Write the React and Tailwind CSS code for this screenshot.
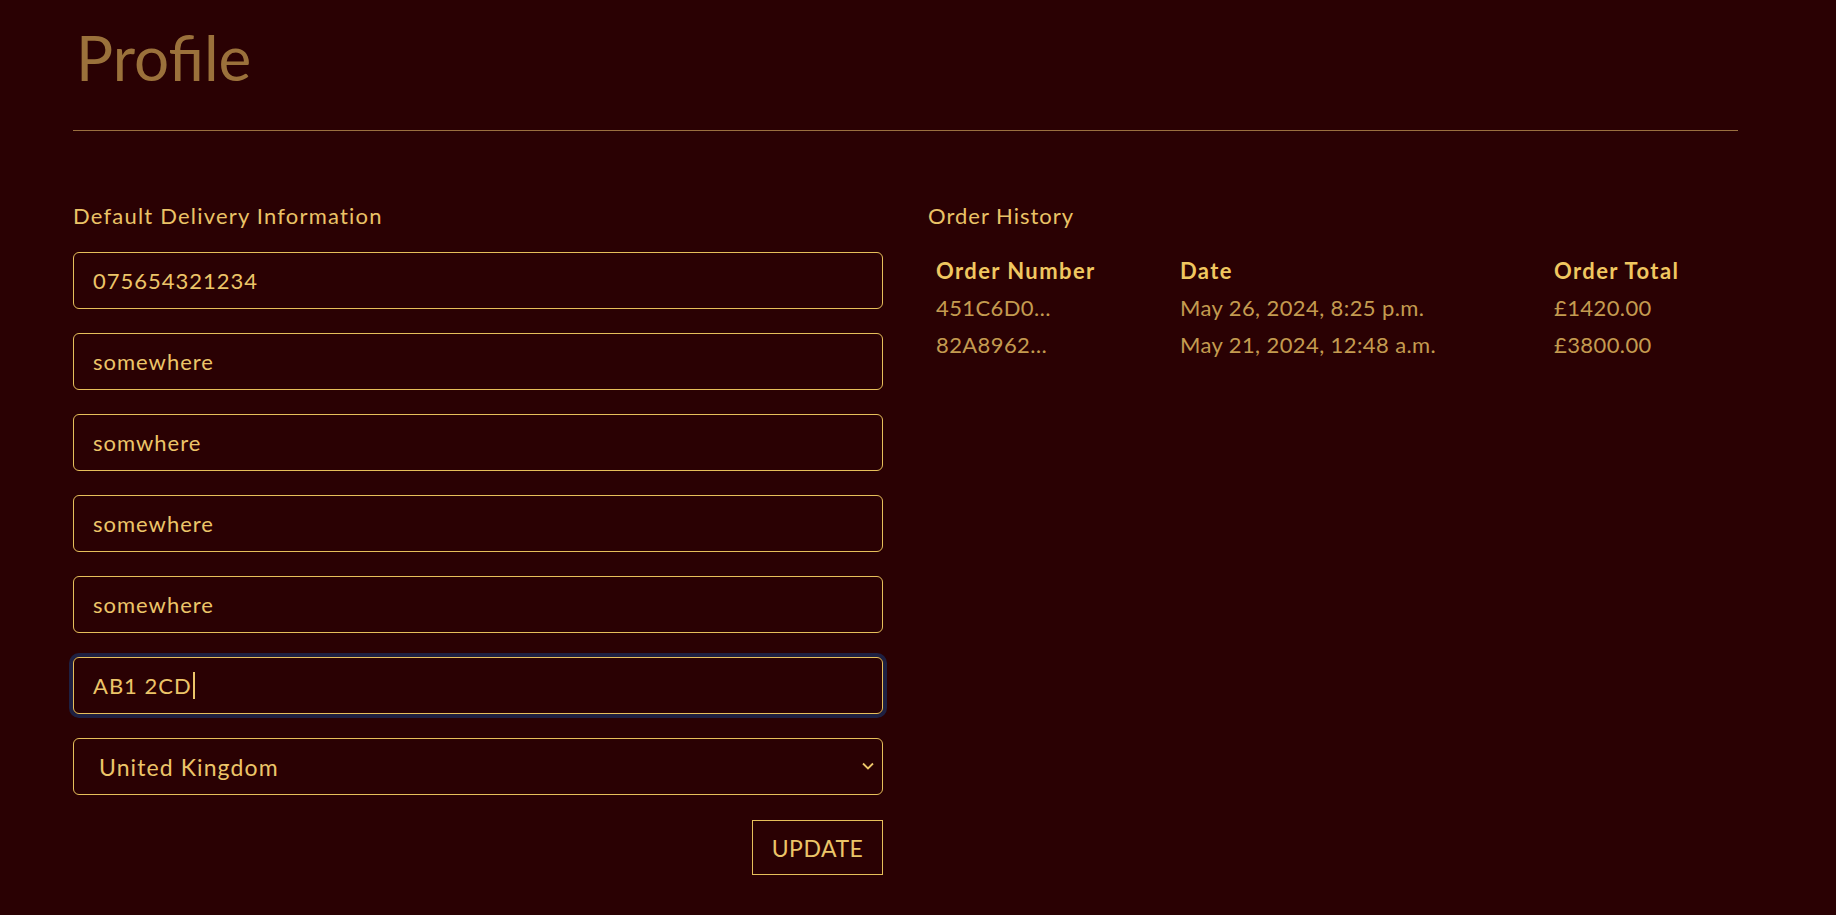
export default function App() {
  const fields = ['075654321234', 'somewhere', 'somwhere', 'somewhere', 'somewhere'];
  const orders = [
    { num: '451C6D0…', date: 'May 26, 2024, 8:25 p.m.', total: '£1420.00' },
    { num: '82A8962…', date: 'May 21, 2024, 12:48 a.m.', total: '£3800.00' },
  ];

  return (
    <div className="min-h-screen bg-[#2a0103] font-['Lato','Open_Sans',sans-serif]">
      <div className="pl-[73px] pr-[98px] pt-[20px]">
        <h1 className="text-[62px] leading-[1.2] text-[#9b713b] pl-[3px]">Profile</h1>
        <hr className="mt-[36px] border-0 h-px bg-[#9a7040]" />

        <div className="grid grid-cols-2 gap-[45px] mt-[68px]">
          {/* delivery info */}
          <div>
            <p className="text-[22px] leading-[33px] tracking-[1.2px] text-[#eac367]">Default Delivery Information</p>
            <div className="mt-[20px] flex flex-col gap-[24px]">
              {fields.map((v, i) => (
                <input
                  key={i}
                  readOnly
                  value={v}
                  className="h-[57px] w-full rounded-[6px] border border-[#e6bf5b] bg-transparent px-[19px] text-[22px] tracking-[1px] text-[#ecc569] outline-none"
                />
              ))}
              <div className="h-[57px] w-full rounded-[6px] border border-[#e6bf5b] shadow-[0_0_0_4px_#1e2042] px-[19px] flex items-center text-[22px] tracking-[1px] text-[#ecc569]">
                AB1 2CD
                <span className="ml-[1px] w-[2px] h-[27px] bg-[#ecc569]" />
              </div>
              <div className="relative">
                <select className="h-[57px] w-full appearance-none rounded-[6px] border border-[#e6bf5b] bg-transparent pl-[25px] pr-[40px] text-[23px] tracking-[1.1px] text-[#ecc569] outline-none">
                  <option>United Kingdom</option>
                </select>
                <svg className="absolute right-[9px] top-[24px] pointer-events-none" width="12" height="8" viewBox="0 0 12 8" fill="none">
                  <path d="M1 1.5l5 5 5-5" stroke="#ecc569" strokeWidth="1.8" />
                </svg>
              </div>
            </div>
            <div className="flex justify-end mt-[25px]">
              <button className="h-[55px] w-[131px] border border-[#e6bf5b] text-[23px] text-[#ecc569] tracking-[0.5px]">
                UPDATE
              </button>
            </div>
          </div>

          {/* orders */}
          <div>
            <p className="text-[22px] leading-[33px] tracking-[1px] text-[#eac367]">Order History</p>
            <div className="mt-[20px] grid grid-cols-[244px_374px_1fr] text-[22px] leading-[37px]">
              <div className="px-[8px] font-bold tracking-[1.4px] text-[#f0c760]">Order Number</div>
              <div className="px-[8px] font-bold tracking-[1.4px] text-[#f0c760]">Date</div>
              <div className="px-[8px] font-bold tracking-[1.4px] text-[#f0c760]">Order Total</div>
              {orders.map((o) => (
                <div key={o.num} className="contents text-[#c49b50] tracking-[0.4px]">
                  <div className="px-[8px]">{o.num}</div>
                  <div className="px-[8px]">{o.date}</div>
                  <div className="px-[8px]">{o.total}</div>
                </div>
              ))}
            </div>
          </div>
        </div>
      </div>
    </div>
  );
}
